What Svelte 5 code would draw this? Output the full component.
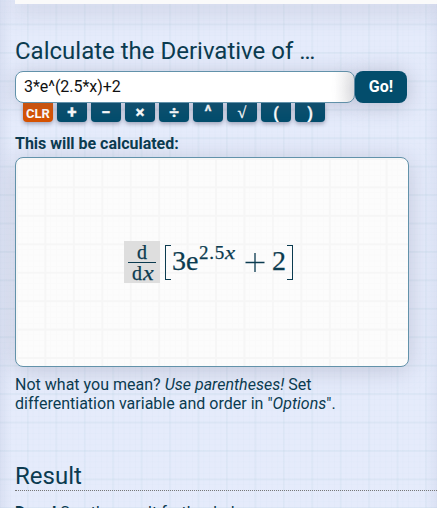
<script>
  let expression = $state('3*e^(2.5*x)+2');
  const keys = [
    { label: 'CLR', kind: 'clr' },
    { label: '+', kind: 'big' },
    { label: '−', kind: 'big' },
    { label: '×', kind: 'big' },
    { label: '÷', kind: 'big' },
    { label: '^', kind: 'caret' },
    { label: '√', kind: 'root' },
    { label: '(', kind: 'paren' },
    { label: ')', kind: 'paren' }
  ];
  function press(label) {
    expression = label === 'CLR' ? '' : expression + label;
  }
</script>

<main>
  <div class="panel"></div>
  <h2>Calculate the Derivative of …</h2>
  <div class="entry">
    <input type="text" bind:value={expression} aria-label="Function" />
    <button class="go">Go!</button>
  </div>
  <div class="keys">
    {#each keys as key}
      <button class={key.kind} onclick={() => press(key.label)}><span>{key.label}</span></button>
    {/each}
  </div>
  <p class="caption">This will be calculated:</p>
  <div class="preview">
    <div class="math">
      <div class="fraction"><span class="num">d</span><span class="den">d<i>x</i></span></div>
      <span class="bracket left"></span>
      <span class="coef">3e</span><span class="sup">2.5<i>x</i></span>
      <svg class="plus" viewBox="0 0 20 20" width="20" height="20"><path d="M.5 10.5h19M10 1v19" /></svg>
      <span class="two">2</span>
      <span class="bracket right"></span>
    </div>
  </div>
  <p class="hint">Not what you mean? <em>Use parentheses!</em> Set<br />differentiation variable and order in "<em>Options</em>".</p>
  <h2 class="result">Result</h2>
  <p class="done"><b>Done!</b> See the result further below.</p>
</main>

<style>
  :global(body) { margin: 0; }
  * { box-sizing: border-box; }
  main {
    width: 437px;
    height: 508px;
    overflow: hidden;
    padding: 0 0 0 15px;
    color: #0b3b50;
    font: 16px/19px Roboto, sans-serif;
    background-color: #e5ebfb;
    background-image:
      linear-gradient(90deg, rgba(145,155,190,.14), transparent 12px, transparent 425px, rgba(145,155,190,.12)),
      linear-gradient(90deg, rgba(175,205,220,.12) 2px, transparent 2px),
      linear-gradient(rgba(175,205,220,.16) 2px, transparent 2px),
      linear-gradient(90deg, rgba(185,210,225,.06) 1px, transparent 1px),
      linear-gradient(rgba(185,210,225,.06) 1px, transparent 1px);
    background-size: auto, 28.45px 28.45px, 28.45px 28.45px, 5.69px 5.69px, 5.69px 5.69px;
    background-position: 0 0, 27px 0, 0 23.5px, 27px 0, 0 23.5px;
  }
  .panel { height: 4px; background: #fafafa; box-shadow: 0 3px 24px 3px rgba(100,100,130,.3); }
  h2 { margin: 33px 0 0; font-size: 24px; line-height: 28px; font-weight: 400; }
  .entry { display: flex; position: relative; z-index: 1; margin-top: 6px; }
  input {
    width: 340px;
    height: 32px;
    padding: 0 8px 1px;
    border: 1px solid #6292aa;
    border-radius: 8px;
    outline: 0;
    background: linear-gradient(90deg, #fff 318px, #ededed);
    box-shadow: 0 2px 20px rgba(100,100,130,.28);
    font: 16px Roboto, sans-serif;
    letter-spacing: -.04px;
    color: #111;
  }
  button { border: 0; padding: 0; color: #fff; background: #034d6c; font-family: Roboto, sans-serif; font-weight: 700; }
  .go { width: 52px; height: 32px; padding-bottom: 1px; border-radius: 8px; font-size: 16px; box-shadow: 0 2px 22px rgba(100,100,130,.38); }
  .keys { display: flex; gap: 4px; padding-left: 8px; }
  .keys button {
    display: flex; justify-content: center; align-items: center;
    width: 30px; height: 19px; overflow: hidden; line-height: 19px;
    border-radius: 0 0 4px 4px; box-shadow: 0 2px 4px rgba(60,60,90,.4);
  }
  .keys .clr { background: #d75200; font-size: 13px; padding-top: 2px; }
  .keys .big { font-size: 17px; -webkit-text-stroke: .3px #fff; }
  .keys .caret { font-size: 16px; -webkit-text-stroke: .3px #fff; padding-bottom: 3px; }
  .keys .root { font: 16px/19px "Liberation Serif", serif; -webkit-text-stroke: .3px #fff; }
  .keys .paren { font-size: 16px; padding-top: 1px; -webkit-text-stroke: .3px #fff; }
  p { margin: 0; }
  .caption { margin-top: 12px; font-weight: 700; letter-spacing: -.02px; }
  .preview {
    display: flex; align-items: flex-start;
    width: 394px; height: 210px; margin-top: 4px; padding: 83px 0 0 108px;
    border: 1px solid #6292aa; border-radius: 8px;
    background-color: #fcfcfc;
    background-image:
      linear-gradient(90deg, #f6f6f6 2px, transparent 2px),
      linear-gradient(#f6f6f6 2px, transparent 2px),
      linear-gradient(90deg, #fafafa 1px, transparent 1px),
      linear-gradient(#fafafa 1px, transparent 1px);
    background-size: 28.45px 28.45px, 28.45px 28.45px, 5.69px 5.69px, 5.69px 5.69px;
    background-position: 0 0;
    box-shadow: 0 3px 24px rgba(100,100,130,.28);
  }
  .math { display: flex; align-items: flex-start; height: 42px; font-family: "Liberation Serif", serif; color: #0b3b50; -webkit-text-stroke: .25px #0b3b50; }
  .fraction { width: 36px; height: 42px; padding: 1px 4px 0; background: #dedede; text-align: center; font-size: 20px; line-height: 20px; }
  .fraction span { display: block; height: 20px; }
  .fraction .num { border-bottom: 1px solid #0b3b50; height: 21px; }
  .fraction .den { letter-spacing: .5px; line-height: 21px; }
  .den i, .sup i { display: inline-block; transform: scaleX(1.2); transform-origin: left; }
  .bracket { width: 6px; height: 35px; margin-top: 4px; border: 1px solid #0b3b50; }
  .left { margin-left: 5px; border-right: 0; }
  .right { margin-left: 1px; border-left: 0; }
  .coef { width: 28px; margin-top: 4px; padding-left: 1px; font-size: 28px; line-height: 32px; }
  .sup { width: 36px; margin-top: 1px; font-size: 19px; line-height: 22px; letter-spacing: .8px; }
  .plus { margin: 11px 7px 0 10px; fill: none; stroke: #0b3b50; stroke-width: 1.3; }
  .two { width: 14px; font-size: 28px; line-height: 32px; margin-top: 4px; }
  .hint { margin-top: 8px; line-height: 19.2px; letter-spacing: .01px; }
  .result { width: 440px; height: 30px; margin-top: 48px; padding-top: 1px; border-bottom: 1px dotted #777; }
  .done { margin-top: 12px; }
</style>
